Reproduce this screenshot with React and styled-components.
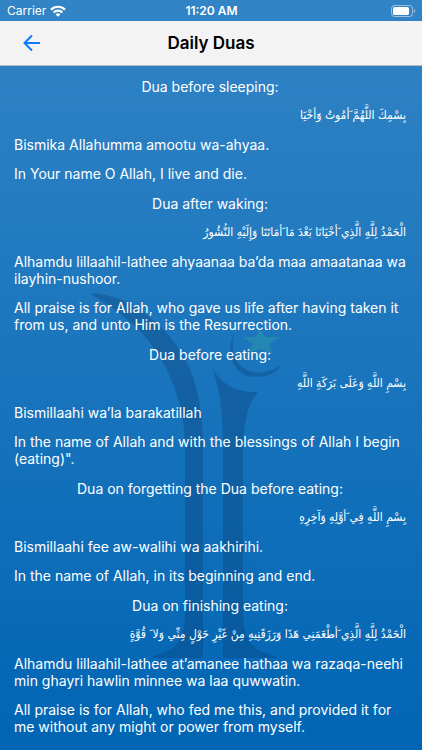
import React from "react";
import styled, { createGlobalStyle } from "styled-components";

const duas = [
  {
    id: 1,
    title: "Dua before sleeping:",
    arabic: "بِسْمِكَ اللَّهُمَّ َأمُوتُ وََأحْيَا",
    latin: "Bismika Allahumma amootu wa-ahyaa.",
    meaning: "In Your name O Allah, I live and die.",
  },
  {
    id: 2,
    title: "Dua after waking:",
    arabic: "الْحَمْدُ لِلَّهِ الَّذِي َأحْيَانَا بَعْدَ مَا َأمَاتَنَا وَإِلَيْهِ النُّشُورُ",
    latin: "Alhamdu lillaahil-lathee ahyaanaa ba’da maa amaatanaa wa ilayhin-nushoor.",
    meaning:
      "All praise is for Allah, who gave us life after having taken it from us, and unto Him is the Resurrection.",
  },
  {
    id: 3,
    title: "Dua before eating:",
    arabic: "بِسْمِ اللَّهِ وَعَلَى بَرَكَةِ اللَّهِ",
    latin: "Bismillaahi wa’la barakatillah",
    meaning:
      'In the name of Allah and with the blessings of Allah I begin (eating)".',
  },
  {
    id: 4,
    title: "Dua on forgetting the Dua before eating:",
    arabic: "بِسْمِ اللَّهِ فِي َأوَّلِهِ وَآخِرِهِ",
    latin: "Bismillaahi fee aw-walihi wa aakhirihi.",
    meaning: "In the name of Allah, in its beginning and end.",
  },
  {
    id: 5,
    title: "Dua on finishing eating:",
    arabic:
      "الْحَمْدُ لِلَّهِ الَّذِي َأطْعَمَنِي هَذَا وَرَزَقَنِيهِ مِنْ غَيْرِ حَوْلٍ مِنِّي وَلا َ قُوَّةٍ",
    latin:
      "Alhamdu lillaahil-lathee at’amanee hathaa wa razaqa-neehi min ghayri hawlin minnee wa laa quwwatin.",
    meaning:
      "All praise is for Allah, who fed me this, and provided it for me without any might or power from myself.",
  },
];

export default function App() {
  return (
    <StyledScreen>
      <GlobalStyle />
      <StatusBar>
        <Carrier>
          Carrier
          <WifiIcon />
        </Carrier>
        <Clock>11:20 AM</Clock>
        <BatteryIcon />
      </StatusBar>
      <Header>
        <BackButton aria-label="Back">
          <svg width="18" height="18" viewBox="0 0 18 18" fill="none" stroke="#0a7aff" strokeWidth="2">
            <path d="M17 9H2M9 1.5 1.5 9 9 16.5" />
          </svg>
        </BackButton>
        <h1>Daily Duas</h1>
      </Header>
      <Content>
        <Watermark />
        {duas.map((dua) => (
          <Dua key={dua.id}>
            <h2>{dua.title}</h2>
            <Arabic lang="ar" dir="rtl">{dua.arabic}</Arabic>
            <p>{dua.latin}</p>
            <p>{dua.meaning}</p>
          </Dua>
        ))}
      </Content>
    </StyledScreen>
  );
}

function WifiIcon() {
  return (
    <svg width="16" height="12" viewBox="0 0 16 12" fill="none" stroke="#fff" strokeWidth="2.2">
      <path d="M1 4.6a10 10 0 0 1 14 0" />
      <path d="M3.6 7.4a6.2 6.2 0 0 1 8.8 0" />
      <path d="M8 11.8 5.6 9.4a3.4 3.4 0 0 1 4.8 0z" fill="#fff" stroke="none" />
    </svg>
  );
}

function BatteryIcon() {
  return (
    <svg width="25" height="12" viewBox="0 0 25 12">
      <rect x="0.5" y="0.5" width="21" height="11" rx="3" fill="none" stroke="#fff" strokeOpacity="0.5" />
      <rect x="2" y="2" width="16" height="8" rx="1.6" fill="#fff" />
      <path d="M23 4v4c1.600-.6 1.600-3.400 0-4z" fill="#fff" fillOpacity="0.5" />
    </svg>
  );
}

function Watermark() {
  return (
    <StyledWatermark width="194" height="368" viewBox="91 292 194 368" aria-hidden="true">
      <g fill="#0b3f73" fillOpacity="0.34">
        <path d="M92 293C112 295 132 301 147 315C172 335 203 366 203 443V658H152C152 655 158 655 163 653C179 647 185 636 185 612V443C184 406 172 370 146 338C132 322 115 308 92 295z" />
        <path d="M212 368C222 385 237 393 258 392C248 403 243 422 243 457V612C243 636 249 647 265 653C270 655 277 655 277 658H223V443C223 412 220 390 212 368z" />
        <path d="M235 333C224 350 233 377 255 377C267 377 276 373 282 365C263 377 245 374 237 361C231 351 232 342 235 333z" />
      </g>
      <path
        d="M260 329L265 337L280 337L269 344L272 354L260 349L246 354L253 344L243 337L256 337z"
        fill="#2c9aa6"
        fillOpacity="0.5"
      />
    </StyledWatermark>
  );
}

const GlobalStyle = createGlobalStyle`
  * {
    box-sizing: border-box;
  }
  body {
    margin: 0;
  }
  h1, h2, p {
    margin: 0;
    font-weight: 400;
  }
`;

const StyledScreen = styled.div`
  min-height: 100vh;
  background: linear-gradient(#3284c5, #0065b4);
  color: #fff;
  font-family: Inter, "Liberation Sans", sans-serif;
`;

const StatusBar = styled.div`
  display: grid;
  grid-template-columns: 1fr auto 1fr;
  align-items: center;
  height: 21px;
  padding: 0 6px 0 7px;
  font-size: 12px;
  > svg {
    justify-self: end;
  }
`;

const Carrier = styled.span`
  display: flex;
  align-items: center;
  gap: 4px;
`;

const Clock = styled.span`
  font-weight: 600;
`;

const Header = styled.header`
  display: grid;
  grid-template-columns: 48px 1fr 48px;
  align-items: center;
  height: 45px;
  background: #f3f3f3;
  border-bottom: 1px solid #b4bcc4;
  h1 {
    color: #000;
    font-size: 17px;
    font-weight: 600;
    text-align: center;
  }
`;

const BackButton = styled.button`
  display: flex;
  justify-content: flex-end;
  padding: 0 7px 0 0;
  border: 0;
  background: none;
  cursor: pointer;
`;

const Content = styled.main`
  position: relative;
  display: flex;
  flex-direction: column;
  gap: 13px;
  padding: 12px 16px 14px 14px;
  font-size: 14px;
  line-height: 17px;
`;

const Dua = styled.section`
  position: relative;
  display: flex;
  flex-direction: column;
  gap: 12px;
  h2 {
    font-size: 14px;
    text-align: center;
  }
`;

const Arabic = styled.p`
  font-family: "DejaVu Sans Condensed", "DejaVu Sans", sans-serif;
  font-size: 12px;
`;

/* faded logo behind the text */
const StyledWatermark = styled.svg`
  position: absolute;
  top: 226px;
  left: calc(50% - 120px);
`;
